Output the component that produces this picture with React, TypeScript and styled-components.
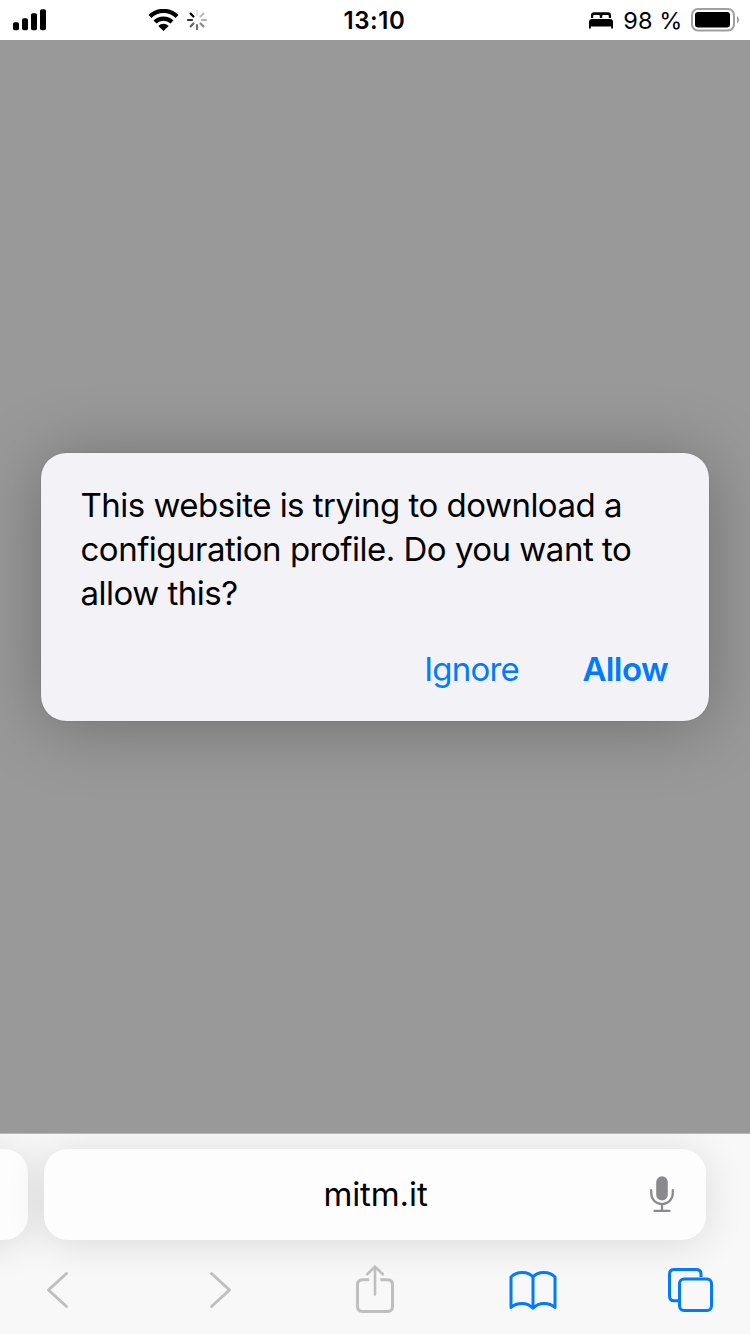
import React from "react";
import styled, { createGlobalStyle } from "styled-components";

const GlobalStyle = createGlobalStyle`
  * { box-sizing: border-box; }
  body { margin: 0; background: #999; }
  button { border: 0; padding: 0; background: none; font: inherit; }
  svg { display: block; flex: none; }
`;

const Screen = styled.div`
  width: 750px;
  height: 1334px;
  display: flex;
  flex-direction: column;
  overflow: hidden;
  background: #999;
  color: #000;
  font-family: Inter, "Liberation Sans", sans-serif;
`;

const StatusBar = styled.header`
  height: 40px;
  flex: none;
  display: grid;
  grid-template-columns: 1fr auto 1fr;
  align-items: center;
  padding: 0 11px 0 13px;
  background: #fff;
`;

const StatusGroup = styled.div<{ $end?: boolean }>`
  display: flex;
  align-items: center;
  justify-content: ${(p) => (p.$end ? "flex-end" : "flex-start")};
`;

const SignalSlot = styled.div`
  width: 135px;
`;

const SpinnerSlot = styled.div`
  margin-left: 8px;
`;

const Time = styled.time`
  padding: 2px 3px 0 0;
  font-size: 24px;
  font-weight: 600;
  line-height: 38px;
  letter-spacing: 0.6px;
`;

const BatteryText = styled.span`
  margin: 0 8.5px 0 10.5px;
  padding-top: 2px;
  font-size: 23.5px;
  line-height: 38px;
  letter-spacing: 0.1px;
  white-space: nowrap;
`;

const PageArea = styled.main`
  flex: 1;
  padding: 413px 41px 0;
`;

const Dialog = styled.section`
  height: 268px;
  padding: 30px 41px 0 39.5px;
  border-radius: 25px;
  background: #f3f2f7;
  box-shadow: 0 5px 70px rgba(0, 0, 0, 0.28), 0 0 1px rgba(0, 0, 0, 0.35);
`;

const Message = styled.p`
  margin: 0;
  font-size: 33px;
  line-height: 44px;
`;

const Line = styled.span<{ $track: number }>`
  display: block;
  white-space: nowrap;
  letter-spacing: ${(p) => p.$track}px;
`;

const Actions = styled.div`
  display: flex;
  justify-content: flex-end;
  gap: 63.5px;
  margin-top: 32px;
`;

const Action = styled.button<{ $strong?: boolean }>`
  color: #007aff;
  font-size: 33px;
  line-height: 44px;
  font-weight: ${(p) => (p.$strong ? 600 : 400)};
  letter-spacing: ${(p) => (p.$strong ? -0.6 : -0.8)}px;
`;

const BottomBar = styled.footer`
  height: 201px;
  flex: none;
  border-top: 1px solid #b8b8b8;
  background: #f8f8f8;
  overflow: hidden;
`;

const TabStrip = styled.div`
  display: flex;
  gap: 16px;
  padding-top: 15px;
`;

const TabCard = styled.div<{ $width: number; $offset?: number }>`
  width: ${(p) => p.$width}px;
  height: 91px;
  flex: none;
  margin-left: ${(p) => p.$offset ?? 0}px;
  display: grid;
  grid-template-columns: 32px 1fr 32px;
  align-items: center;
  justify-items: center;
  padding: 0 28px;
  border-radius: 24px;
  background: #fdfdfd;
  box-shadow: 0 4px 40px rgba(0, 0, 0, 0.12);
`;

const Address = styled.span`
  grid-column: 2;
  padding: 0 0 2px 1px;
  font-size: 33px;
  line-height: 44px;
  letter-spacing: -0.1px;
`;

const Toolbar = styled.nav`
  display: grid;
  grid-template-columns: 164px 147px 152.5px 159.5px auto;
  align-items: center;
  height: 60px;
  padding-left: 45px;
  margin-top: 20px;
`;

const ToolButton = styled.button<{ $active?: boolean }>`
  justify-self: start;
  color: ${(p) => (p.$active ? "#007aff" : "#bfbfbf")};
`;

const SignalIcon = () => (
  <svg width="34" height="22" viewBox="0 0 34 22">
    <rect x="0" y="13.3" width="6" height="8" rx="1.8" />
    <rect x="9" y="9.3" width="6" height="12" rx="1.8" />
    <rect x="18" y="4.3" width="6" height="17" rx="1.8" />
    <rect x="27" y="0.3" width="6" height="21" rx="1.8" />
  </svg>
);

const WifiIcon = () => (
  <svg width="31" height="22" viewBox="0 0 31 22">
    <path d="M2 7.5a19 19 0 0 1 27 0" fill="none" stroke="#000" strokeWidth="4.2" />
    <path d="M7 13.1a12 12 0 0 1 17 0" fill="none" stroke="#000" strokeWidth="4.2" />
    <path d="M15.5 22 10.300 17a7.400 7.400 0 0 1 10.400 0z" />
  </svg>
);

const SPOKES = [0.1, 0.25, 0.3, 0.45, 0.55, 0.6, 0.8, 1];

const SpinnerIcon = () => (
  <svg width="20" height="20" viewBox="-10 -10 20 20">
    {SPOKES.map((opacity, i) => (
      <line
        key={i}
        y1="-9"
        y2="-5"
        stroke="#000"
        strokeWidth="2.2"
        strokeLinecap="round"
        opacity={opacity}
        transform={`rotate(${(i - 1) * 45 + 45})`}
      />
    ))}
  </svg>
);

const BedIcon = () => (
  <svg width="24" height="17" viewBox="0 0 24 17">
    <path d="M2 6V3.2Q2 .2 5 .2h14q3 0 3 3V6h-2.200V4q0-1-1-1h-4.600q-1 0-1 1V6h-2.400V4q0-1-1-1H5.200q-1 0-1 1V6z" />
    <path d="M0 16V10q0-3 3-3h18q3 0 3 3v6q0 .7-.9.700t-.9-.7v-1.600H1.800v1.600q0 .7-.9.700T0 16z" />
  </svg>
);

const BatteryIcon = () => (
  <svg width="48" height="24" viewBox="0 0 48 24">
    <rect x="1" y="1" width="42" height="21.5" rx="6" fill="none" stroke="#a0a0a0" strokeWidth="2" />
    <rect x="4" y="4" width="35" height="15.5" rx="3" />
    <path d="M46 8q2 1 2 3.75t-2 3.75z" fill="#a0a0a0" />
  </svg>
);

const MicIcon = () => (
  <svg width="24" height="37" viewBox="0 0 24 37">
    <rect x="6.2" y="0.3" width="11.6" height="24.2" rx="5.8" fill="#8a8a8e" />
    <path
      d="M1.2 14v3.3a10.8 10.8 0 0 0 21.6 0V14M12 28.5V34M4.5 34.900h15"
      fill="none"
      stroke="#8a8a8e"
      strokeWidth="2.2"
      strokeLinecap="round"
    />
  </svg>
);

const Chevron = ({ forward = false }: { forward?: boolean }) => (
  <svg width="24" height="38" viewBox="0 0 24 38" fill="none" stroke="currentColor" strokeWidth="3" strokeLinecap="round" strokeLinejoin="round">
    <path d={forward ? "M2.5 2.5 20.5 19 2.5 35.5" : "M21.5 2.5 3.5 19l18 16.5"} />
  </svg>
);

const ShareIcon = () => (
  <svg width="38" height="50" viewBox="0 0 38 50" fill="none" stroke="currentColor" strokeWidth="3" strokeLinecap="round" strokeLinejoin="round">
    <path d="M13.2 14.8H6.5q-5 0-5 5V41.4q0 5 5 5h25q5 0 5-5V19.8q0-5-5-5h-7.2" strokeLinecap="butt" />
    <path d="M19 29.5V1.6M11.2 9.3 19 1.6l7.8 7.7" strokeWidth="2.6" />
  </svg>
);

const BookIcon = () => (
  <svg width="48" height="40" viewBox="0 0 48 40" fill="none" stroke="currentColor" strokeWidth="3" strokeLinecap="round" strokeLinejoin="round">
    <path d="M24 7C19 1.3 8 .9 2 7V37.5c6-5.3 16-5.3 22 .7 6-6 16-6 22-.7V7C40 .9 29 1.3 24 7zV38" />
  </svg>
);

const TabsIcon = () => (
  <svg width="46" height="44" viewBox="0 0 46 44" fill="none" stroke="currentColor" strokeWidth="3">
    <path d="M33 9V6.3q0-4.8-4.8-4.8H6.3q-4.8 0-4.8 4.8V28q0 4.8 4.8 4.8H10" />
    <rect x="11.5" y="11" width="32" height="31.5" rx="4.5" />
  </svg>
);

export default function App() {
  return (
    <Screen>
      <GlobalStyle />
      <StatusBar>
        <StatusGroup>
          <SignalSlot>
            <SignalIcon />
          </SignalSlot>
          <WifiIcon />
          <SpinnerSlot>
            <SpinnerIcon />
          </SpinnerSlot>
        </StatusGroup>
        <Time>13:10</Time>
        <StatusGroup $end>
          <BedIcon />
          <BatteryText>98 %</BatteryText>
          <BatteryIcon />
        </StatusGroup>
      </StatusBar>
      <PageArea>
        <Dialog role="dialog">
          <Message>
            <Line $track={-0.51}>This website is trying to download a</Line>
            <Line $track={-0.5}>configuration profile. Do you want to</Line>
            <Line $track={-0.5}>allow this?</Line>
          </Message>
          <Actions>
            <Action>Ignore</Action>
            <Action $strong>Allow</Action>
          </Actions>
        </Dialog>
      </PageArea>
      <BottomBar>
        <TabStrip>
          <TabCard $width={662} $offset={-634} />
          <TabCard $width={662}>
            <Address>mitm.it</Address>
            <MicIcon />
          </TabCard>
        </TabStrip>
        <Toolbar>
          <ToolButton aria-label="Back"><Chevron /></ToolButton>
          <ToolButton aria-label="Forward"><Chevron forward /></ToolButton>
          <ToolButton aria-label="Share"><ShareIcon /></ToolButton>
          <ToolButton $active aria-label="Bookmarks"><BookIcon /></ToolButton>
          <ToolButton $active aria-label="Tabs"><TabsIcon /></ToolButton>
        </Toolbar>
      </BottomBar>
    </Screen>
  );
}
